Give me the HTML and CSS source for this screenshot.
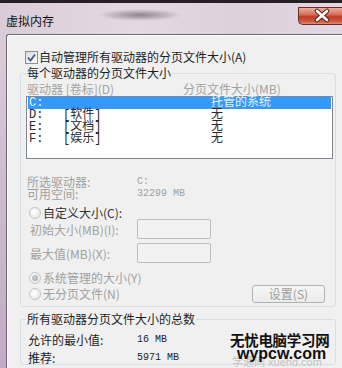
FILE: index.html
```html
<!DOCTYPE html>
<html lang="zh-CN">
<head>
    <meta charset="UTF-8">
    <title>虚拟内存</title>
    <link rel="stylesheet" href="styles.css">
</head>
<body>

<div class="window">
    <div class="titlebar">
        <span class="title">虚拟内存</span>
        <span class="close-btn">
            <svg width="44" height="18" viewBox="0 0 44 18">
                <path d="M19 4 L29 13 M29 4 L19 13" stroke="#5a1f1a" stroke-width="4.5" stroke-linecap="round"/>
                <path d="M19 4 L29 13 M29 4 L19 13" stroke="#ffffff" stroke-width="2.6" stroke-linecap="round"/>
            </svg>
        </span>
    </div>

    <div class="client">
        <div class="check-row">
            <span class="checkbox">
                <svg width="11" height="11" viewBox="0 0 11 11">
                    <path d="M2 5.5 L4.5 8.5 L9 2.5" fill="none" stroke="#3d5a91" stroke-width="1.8"/>
                </svg>
            </span>
            <span>自动管理所有驱动器的分页文件大小(A)</span>
        </div>

        <fieldset class="group">
            <legend>每个驱动器的分页文件大小</legend>

            <div class="list-head">
                <span class="col-drive">驱动器 [卷标](D)</span>
                <span>分页文件大小(MB)</span>
            </div>

            <div class="drive-list">
                <div class="drive-row selected"><span class="c1">C:</span><span class="c2"></span><span class="c3">托管的系统</span></div>
                <div class="drive-row"><span class="c1">D:</span><span class="c2">[软件]</span><span class="c3">无</span></div>
                <div class="drive-row"><span class="c1">E:</span><span class="c2">[文档]</span><span class="c3">无</span></div>
                <div class="drive-row"><span class="c1">F:</span><span class="c2">[娱乐]</span><span class="c3">无</span></div>
            </div>

            <div class="info-row first disabled"><span class="lbl">所选驱动器:</span><span class="num">C:</span></div>
            <div class="info-row disabled"><span class="lbl">可用空间:</span><span class="num">32299 MB</span></div>

            <div class="radio-row custom">
                <span class="radio"></span>
                <span>自定义大小(C):</span>
            </div>
            <div class="size-row disabled">
                <span class="size-lbl">初始大小(MB)(I):</span>
                <span class="textbox"></span>
            </div>
            <div class="size-row second disabled">
                <span class="size-lbl">最大值(MB)(X):</span>
                <span class="textbox"></span>
            </div>

            <div class="radio-row managed disabled">
                <span class="radio checked"></span>
                <span>系统管理的大小(Y)</span>
            </div>
            <div class="radio-row nopage disabled">
                <span class="radio"></span>
                <span>无分页文件(N)</span>
                <span class="btn">设置(S)</span>
            </div>
        </fieldset>

        <fieldset class="group total">
            <legend>所有驱动器分页文件大小的总数</legend>
            <div class="total-row first"><span class="lbl">允许的最小值:</span><span class="num">16 MB</span></div>
            <div class="total-row"><span class="lbl">推荐:</span><span class="num">5971 MB</span></div>
        </fieldset>
    </div>

    <!-- 水印 -->
    <div class="watermark">
        <div class="wm-cn">无忧电脑学习网</div>
        <div class="wm-en">wypcw.com</div>
        <div class="wm-faint">学通网 xuehd.com</div>
    </div>
</div>

</body>
</html>
```

FILE: styles.css
```css
body {
    margin: 0;
    width: 342px;
    height: 368px;
    overflow: hidden;
    font-family: "Noto Sans CJK SC", "DejaVu Sans", sans-serif;
    font-size: 12px;
    color: #1e1e1e;
}

.window {
    position: relative;
    width: 342px;
    height: 368px;
    overflow: hidden;
    background: linear-gradient(#ddd0dc, #cfbad1 50%, #c3aac7);
}

.titlebar {
    display: flex;
    align-items: flex-start;
    height: 31px;
    border-top: 3px solid #262026;
    background:
        radial-gradient(ellipse 42px 6px at 140px 12px, rgba(70, 60, 72, 0.55), rgba(70, 60, 72, 0)),
        linear-gradient(90deg, #d9ccd8, #e4d9e3 40%, #dcd0db 70%, #e2d8e1);
}

.title {
    margin-top: 11px;
    margin-left: 6px;
    line-height: 14px;
    color: #111;
}

.close-btn {
    margin-left: auto;
    margin-top: 4px;
    width: 44px;
    height: 18px;
    box-sizing: border-box;
    border: 1px solid #6d2b26;
    border-right: none;
    border-radius: 0 0 0 5px;
    background: linear-gradient(#eab0a0, #d7705d 40%, #bf3a27 55%, #cf5d45 85%, #e28f70);
    overflow: hidden;
}

.close-btn svg {
    display: block;
    margin: -1px 0 0 -1px;
}

.client {
    height: 334px;
    box-sizing: border-box;
    margin-left: 6px;
    padding: 15px 6px 0 12px;
    background-color: #f0f0f0;
    border-left: 1px solid #6f6872;
    border-top: 1px solid #6f6872;
    box-shadow: inset 1px 1px 0 #ffffff;
    border-top-left-radius: 3px;
    overflow: hidden;
}

.check-row {
    display: flex;
    align-items: center;
    height: 14px;
    line-height: 14px;
    padding-left: 6px;
    gap: 1px;
}

.checkbox {
    width: 13px;
    height: 13px;
    box-sizing: border-box;
    border: 1px solid #8e8f8f;
    background: linear-gradient(135deg, #dcdcdc, #fbfbfb);
    display: flex;
    align-items: center;
    justify-content: center;
}

.group {
    margin: 2px 0 0 1px;
    padding: 0 2px 3px 6px;
    border: 1px solid #d5dfe5;
    border-radius: 3px;
    min-width: 0;
}

.group legend {
    padding: 0 1px;
    margin-left: -1px;
    line-height: 14px;
    color: #1e1e1e;
}

.list-head {
    display: flex;
    margin-top: 3px;
    height: 12px;
    line-height: 12px;
    color: #a3a3a3;
}

.col-drive {
    width: 156px;
}

.drive-list {
    margin-top: 1px;
    margin-left: -1px;
    height: 63px;
    box-sizing: border-box;
    border: 1px solid #828790;
    background-color: #ffffff;
    padding: 0 1px;
    font-family: "Liberation Mono", "Noto Sans CJK SC", monospace;
    color: #2a2a2a;
}

.drive-row {
    display: flex;
    height: 12px;
    line-height: 12px;
}

.drive-row.selected {
    background-color: #3399ff;
    color: #e8f2ff;
}

.c1 {
    width: 34px;
    padding-left: 1px;
}

.c2 {
    width: 148px;
}

.info-row {
    display: flex;
    height: 12px;
    line-height: 12px;
}

.info-row.first {
    margin-top: 17px;
}

.lbl {
    width: 110px;
}

.num {
    font-family: "Liberation Mono", monospace;
    font-size: 10px;
}

.disabled {
    color: #a0a0a0;
}

.radio-row {
    display: flex;
    align-items: center;
    gap: 2px;
    padding-left: 2px;
    height: 12px;
    line-height: 12px;
}

.radio-row.custom {
    margin-top: 7px;
    color: #333;
}

.radio-row.managed {
    margin-top: 9px;
}

.radio-row.nopage {
    margin-top: 1px;
    height: 18px;
}

.radio {
    width: 12px;
    height: 12px;
    box-sizing: border-box;
    border: 1px solid #c4c4c4;
    border-radius: 50%;
    background: radial-gradient(circle at 40% 40%, #ffffff, #e2e2e2);
    display: flex;
    align-items: center;
    justify-content: center;
}

.radio.checked::after {
    content: "";
    width: 6px;
    height: 6px;
    border-radius: 50%;
    background: radial-gradient(circle at 40% 40%, #d4d4d4, #9a9a9a);
}

.size-row {
    display: flex;
    align-items: center;
    height: 20px;
    padding-left: 3px;
}

.size-row.second {
    margin-top: 4px;
}

.size-lbl {
    width: 107px;
}

.textbox {
    width: 74px;
    height: 20px;
    box-sizing: border-box;
    border: 1px solid #bdbdbd;
    border-radius: 2px;
    background-color: #f2f2f2;
}

.btn {
    margin-left: auto;
    margin-right: 8px;
    width: 73px;
    height: 18px;
    box-sizing: border-box;
    border: 1px solid #adb2b5;
    border-radius: 3px;
    background: linear-gradient(#f6f6f6, #ececec);
    text-align: center;
    line-height: 16px;
    color: #9c9c9c;
}

.group.total {
    margin-top: 5px;
    height: 48px;
}

.total-row {
    display: flex;
    height: 18px;
    line-height: 18px;
    padding-left: 1px;
}

.total-row.first {
    margin-top: 5px;
}

.total-row .lbl {
    width: 109px;
}

.watermark {
    position: absolute;
    left: 230px;
    top: 331px;
    width: 112px;
}

.wm-cn {
    font-family: "Noto Sans CJK SC", sans-serif;
    font-weight: bold;
    font-size: 14.5px;
    line-height: 18px;
    color: #111;
    letter-spacing: -0.3px;
}

.wm-en {
    position: relative;
    z-index: 1;
    margin-top: -3px;
    padding-left: 7px;
    font-family: "Liberation Sans", sans-serif;
    font-weight: bold;
    font-size: 16px;
    line-height: 15px;
    color: #111;
}

.wm-faint {
    margin-top: -5px;
    padding-left: 2px;
    font-family: "Liberation Sans", "Noto Sans CJK SC", sans-serif;
    font-size: 11px;
    line-height: 12px;
    color: #c4c4c4;
}
```
